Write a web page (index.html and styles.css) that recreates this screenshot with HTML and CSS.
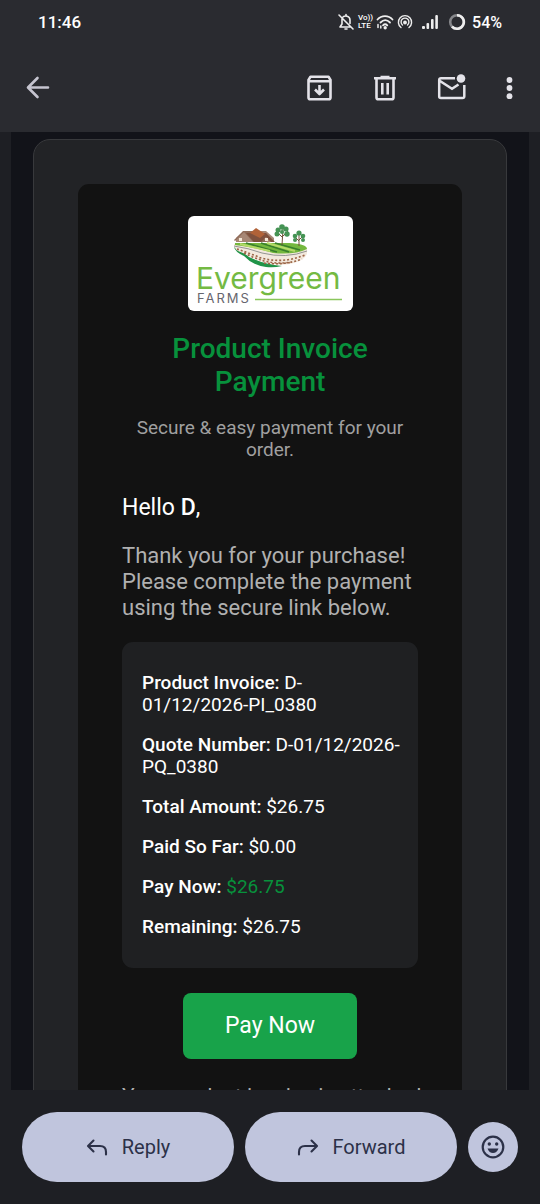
FILE: index.html
```html
<!DOCTYPE html>
<html lang="en">
<head>
<meta charset="utf-8">
<meta name="viewport" content="width=device-width, initial-scale=1">
<title>Product Invoice Payment</title>
<link rel="stylesheet" href="styles.css">
</head>
<body>
<header class="top">
  <div class="status">
    <span class="clock">11:46</span>
    <div class="indicators">
      <svg width="18" height="18" viewBox="0 0 18 18" fill="none" stroke="#eee" stroke-width="1.6" stroke-linecap="round" stroke-linejoin="round"><path d="M2 2l14 14M5 6v5l-2 3h10M6 4c2-2 7-1 7 3v3.500M9 1.500V3M8 16h2"/></svg>
      <span class="volte"><span>Vo))</span><span>LTE</span></span>
      <svg width="18" height="16" viewBox="0 0 18 16" fill="none" stroke="#eee" stroke-width="1.800" stroke-linecap="round"><path d="M1.500 5.500c4-4.500 11-4.500 15 0M4.500 8.500c3-3 6.500-3 9.500 0M7 11.300c1.300-1.300 3-1.300 4.300 0"/><circle cx="9.200" cy="13.800" r=".8" fill="#eee"/><path d="M2 10.500v3M4.800 14v-2" stroke-width="1.500"/></svg>
      <svg width="16" height="16" viewBox="0 0 16 16" fill="none" stroke="#eee" stroke-width="1.400" stroke-linecap="round"><path d="M4 13.500a6.600 6.600 0 1 1 8 0M5.500 11a3.900 3.900 0 1 1 5 0"/><circle cx="8" cy="8.500" r="1.200" fill="#eee"/></svg>
      <svg class="bars" width="17" height="15" viewBox="0 0 17 15" fill="#eee"><rect x="0" y="11" width="3" height="3" rx="1"/><rect x="4.500" y="8" width="2.600" height="6" rx="1"/><rect x="9" y="4" width="2.600" height="10" rx="1"/><rect x="13.300" y="0" width="2.600" height="14" rx="1"/></svg>
      <svg class="ring" width="18" height="18" viewBox="0 0 18 18" fill="none" stroke-width="2.600"><circle cx="9" cy="9" r="6.800" stroke="#85868a"/><path d="M9 2.200a6.800 6.800 0 1 1-5 11.400" stroke="#eee"/></svg>
      <span class="percent">54%</span>
    </div>
  </div>
  <nav class="toolbar" aria-label="Message actions">
    <button class="icon-btn" aria-label="Back"><svg width="24" height="24" viewBox="0 0 24 24" fill="none" stroke="#c6c5d0" stroke-width="2.600" stroke-linecap="round" stroke-linejoin="round"><path d="M11.500 2L2 11.500l9.500 9.500M2.500 11.500H22"/></svg></button>
    <div class="actions">
      <button class="icon-btn" aria-label="Archive"><svg width="28" height="28" viewBox="0 0 28 28" fill="none" stroke="#e4e3e9" stroke-width="2.600" stroke-linejoin="round"><path d="M3.500 6l2-3.300h18L25.500 6v17.500q0 1.800-1.800 1.800H5.300q-1.800 0-1.800-1.800zM3.500 7.300h22M14.500 11v9M10 15.500l4.500 4.500 4.500-4.500"/></svg></button>
      <button class="icon-btn" aria-label="Delete"><svg width="28" height="28" viewBox="0 0 28 28" fill="none" stroke="#e4e3e9" stroke-width="2.600"><path d="M3 4.300h22M9.500 3h9M5.500 4.300v19.200q0 1.800 1.800 1.800h13.400q1.800 0 1.800-1.800V4.300M11.300 9v11.500M16.700 9v11.500"/></svg></button>
      <button class="icon-btn" aria-label="Mark unread"><svg width="30" height="28" viewBox="0 0 30 28" fill="none" stroke="#e4e3e9" stroke-width="2.500"><path d="M18 4.300H4q-1.800 0-1.800 1.800v16.500q0 1.500 1.800 1.500h21.500q1.800 0 1.800-1.800V11M3 7l12 7.800 6.500-4.300"/><circle cx="24" cy="4.500" r="4.300" fill="#e4e3e9" stroke="none"/></svg></button>
      <button class="icon-btn" aria-label="More options"><svg width="9" height="24" viewBox="0 0 9 24" fill="#e4e3e9"><circle cx="4.500" cy="4" r="2.900"/><circle cx="4.500" cy="12" r="2.900"/><circle cx="4.500" cy="20.200" r="2.900"/></svg></button>
    </div>
  </nav>
</header>
<main class="viewport">
  <div class="canvas">
    <div class="frame">
      <article class="mail">
        <svg class="logo" width="165" height="95" viewBox="0 0 165 95" role="img" aria-label="Evergreen Farms">
          <rect width="165" height="95" rx="6" fill="#fff"/>
          <path d="M46 31q8 4 15 10 14 7 33 9-8 2-16 1-14-2-22-11-9-4-10-9z" fill="#209448"/>
          <path d="M46 28q-1 6 9 9l8 4q14 7 30 8 16-1 23-7 4-3 3-9z" fill="#f3e9dd"/>
          <path d="M49 33q12 4 24 9 22 6 44-3M56 37q10 5 20 8 20 5 38-2M76 47q14 2 28-1" fill="none" stroke="#9b6547" stroke-width="1.600" stroke-dasharray="2 2"/>
          <path d="M46 30q14 2 28 7 24 6 45-2" fill="none" stroke="#929492"/>
          <path d="M47 27h54q18 1 18 6-12 6-34 4Q66 31 47 29z" fill="#74b83e"/>
          <path d="M58 27l31 9M73 27l28 9M87 27l25 7" stroke="#397f2c" stroke-width="1.500"/>
          <path d="M52 28l30 7M79 27l28 8" stroke="#b4da68" stroke-width="2"/>
          <path d="M48 26v-4l8-7h22l8 7v4z" fill="#a78775"/>
          <path d="M46 24l9-9h14l10 11H65L56 16l-9 9z" fill="#8f6b58"/>
          <path d="M66 26l-8-9h20l9 9h-4l-5-5-5 5z" fill="#80513d"/>
          <path d="M62 17l6-5 9 6-5 4z" fill="#b16238"/><path d="M51 22h3v3h-3zM77 22h3v3h-3z" fill="#f4e7d7"/>
          <path d="M94 29l1-16M95 22l-5-5M95 20l5-5M111 30V19M111 25l-4-4M111 24l4-4" stroke="#73503b"/>
          <g fill="#459354"><circle cx="94" cy="11" r="2.800"/><circle cx="90" cy="14" r="2.500"/><circle cx="98" cy="13" r="2.600"/><circle cx="89" cy="18" r="2.500"/><circle cx="99" cy="18" r="2.700"/><circle cx="94" cy="16" r="2"/><circle cx="111" cy="17" r="2.600"/><circle cx="107" cy="20" r="2.300"/><circle cx="115" cy="20" r="2.300"/><circle cx="107" cy="24" r="2"/><circle cx="115" cy="24" r="2"/></g>
          <text class="logo-name" x="8" y="73">Evergreen</text>
          <text class="logo-sub" x="9" y="87">FARMS</text>
          <path d="M67 83.500h87" stroke="#8ac65c" stroke-width="1.500"/>
        </svg>
        <h1 class="title">Product Invoice Payment</h1>
        <p class="subtitle">Secure &amp; easy payment for your order.</p>
        <div class="content">
          <p class="hello">Hello <strong>D</strong>,</p>
          <p class="copy">Thank you for your purchase! Please complete the payment using the secure link below.</p>
          <section class="details">
            <p><strong>Product Invoice:</strong> D-01/12/2026-PI_0380</p>
            <p><strong>Quote Number:</strong> D-01/12/2026-PQ_0380</p>
            <p><strong>Total Amount:</strong> $26.75</p>
            <p><strong>Paid So Far:</strong> $0.00</p>
            <p><strong>Pay Now:</strong> <span class="due">$26.75</span></p>
            <p><strong>Remaining:</strong> $26.75</p>
          </section>
          <a class="pay" href="#">Pay Now</a>
          <p class="note">Your product invoice is attached</p>
        </div>
      </article>
    </div>
  </div>
</main>
<footer class="reply-bar">
  <button class="pill"><svg width="22" height="18" viewBox="0 0 22 18" fill="none" stroke="#2c3148" stroke-width="2.100" stroke-linecap="round" stroke-linejoin="round"><path d="M7.500 2.500L2 8l5.500 5.500M2.500 8H14q6 0 6 6v2.500"/></svg>Reply</button>
  <button class="pill"><svg width="22" height="18" viewBox="0 0 22 18" fill="none" stroke="#2c3148" stroke-width="2.100" stroke-linecap="round" stroke-linejoin="round"><path d="M14.500 2.500L20 8l-5.500 5.500M19.500 8H8q-6 0-6 6v2.500"/></svg>Forward</button>
  <button class="emoji" aria-label="Add reaction"><svg width="24" height="24" viewBox="0 0 24 24" fill="#2c3148"><circle cx="12" cy="12" r="10.300" fill="none" stroke="#2c3148" stroke-width="2.200"/><circle cx="8.300" cy="9" r="1.700"/><circle cx="15.700" cy="9" r="1.700"/><path d="M6.500 13.500h11q-1.800 4.500-5.500 4.500t-5.500-4.500z"/></svg></button>
</footer>
</body>
</html>
```
FILE: styles.css
```css
* { box-sizing: border-box; }
body {
  margin: 0;
  height: 100vh;
  display: flex;
  flex-direction: column;
  overflow: hidden;
  background: #1e1f24;
  color: #fff;
  font-family: Roboto, "Liberation Sans", sans-serif;
}
p, h1 { margin: 0; }
svg { display: block; flex: none; }
button { border: 0; padding: 0; background: none; font: inherit; cursor: pointer; }

.top { flex: none; background: #2a2b30; }
.status {
  display: flex;
  justify-content: space-between;
  align-items: center;
  height: 44px;
  padding: 0 38px;
  font-size: 17px;
  font-weight: 500;
}
.indicators { display: flex; align-items: center; gap: 3px; }
.volte {
  display: flex;
  flex-direction: column;
  font-size: 8px;
  line-height: 8px;
  font-weight: 500;
}
.bars { margin-left: 6px; }
.ring { margin-left: 6px; }
.percent { margin-left: 3px; font-size: 16px; }
.toolbar {
  display: flex;
  justify-content: space-between;
  align-items: center;
  height: 88px;
  padding: 0 26px;
}
.actions { display: flex; align-items: center; gap: 38px; }

.viewport { flex: 1; min-height: 0; overflow: hidden; padding: 0 11px; }
.canvas { padding: 7px 22px; background: #121319; }
.frame {
  padding: 44px;
  border: 1px solid #38393c;
  border-radius: 17px;
  background: #222326;
}
.mail {
  padding: 32px 44px;
  border-radius: 11px;
  background: #121212;
}
.logo { margin: 0 auto 21px; }
.logo-name { font: 30px Inter, sans-serif; fill: #74ba43; }
.logo-sub { font: 13px Inter, sans-serif; letter-spacing: 2px; fill: #66666e; }
.title {
  font-size: 28px;
  line-height: 33px;
  font-weight: 500;
  text-align: center;
  color: #07913c;
}
.subtitle {
  margin-top: 19px;
  font-size: 19px;
  line-height: 22px;
  text-align: center;
  color: #a0a0a0;
}
.content { display: flex; flex-direction: column; margin-top: 34px; }
.hello { font-size: 23px; line-height: 26px; }
.copy { margin-top: 22px; font-size: 22px; line-height: 26px; color: #b0b0b0; }
.note { margin-top: 24px; font-size: 21px; line-height: 26px; white-space: nowrap; color: #b0b0b0; }
.details {
  display: flex;
  flex-direction: column;
  gap: 18px;
  margin-top: 21px;
  padding: 30px 18px 30px 20px;
  border-radius: 11px;
  background: #1f2022;
  font-size: 19px;
  line-height: 22px;
}
strong { font-weight: 500; }
.due { color: #07913c; }
.pay {
  align-self: center;
  margin-top: 25px;
  padding: 20px 42px;
  border-radius: 8px;
  background: #18a34a;
  color: #fff;
  font-size: 23px;
  line-height: 26px;
  text-decoration: none;
}

.reply-bar {
  flex: none;
  display: flex;
  align-items: center;
  gap: 11px;
  padding: 22px;
}
.pill {
  flex: 1;
  display: flex;
  align-items: center;
  justify-content: center;
  gap: 14px;
  height: 70px;
  border-radius: 35px;
  background: #c0c5dd;
  color: #2c3148;
  font-size: 20px;
}
.emoji {
  display: grid;
  place-items: center;
  width: 50px;
  height: 50px;
  border-radius: 50%;
  background: #c0c5dd;
}
```
